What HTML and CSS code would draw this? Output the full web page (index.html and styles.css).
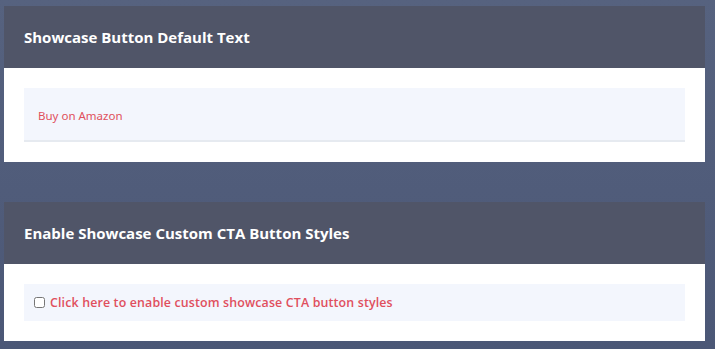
FILE: index.html
```html
<!DOCTYPE html>
<html lang="en">
<head>
  <meta charset="UTF-8" />
  <meta name="viewport" content="width=device-width, initial-scale=1.0"/>
  <title>Showcase Settings</title>
  <link rel="stylesheet" href="styles.css">
</head>
<body>
  <div class="panel">
    <div class="panel-head">
      <h2>Showcase Button Default Text</h2>
    </div>
    <div class="panel-body">
      <div class="field text-field">Buy on Amazon</div>
    </div>
  </div>

  <div class="panel">
    <div class="panel-head">
      <h2>Enable Showcase Custom CTA Button Styles</h2>
    </div>
    <div class="panel-body">
      <label class="field check-field">
        <input type="checkbox" />
        <span>Click here to enable custom showcase CTA button styles</span>
      </label>
    </div>
  </div>
</body>
</html>
```

FILE: styles.css
```css
html {
  background: linear-gradient(to bottom, #56627f, #4b5776);
  min-height: 100%;
}

body {
  margin: 6px 10px 0 4px;
  font-family: 'Open Sans', sans-serif;
  display: flex;
  flex-direction: column;
  gap: 40px;
}

.panel {
  background: #fff;
}

.panel-head {
  background: #505568;
  height: 62px;
  display: flex;
  align-items: center;
  padding: 0 20px;
}

.panel-head h2 {
  margin: 0;
  color: #fff;
  font-size: 15px;
  font-weight: 700;
}

.panel-body {
  padding: 20px;
}

.field {
  background: #f3f6fd;
  display: flex;
  align-items: center;
}

.text-field {
  box-sizing: border-box;
  height: 54px;
  padding: 2px 14px 0;
  border-bottom: 2px solid #e6eaf0;
  color: #e0505c;
  font-size: 11.5px;
  font-family: 'Noto Sans', sans-serif;
}

.check-field {
  height: 37px;
  padding: 0 10px;
  gap: 5px;
  color: #e04f5d;
  font-size: 12.4px;
  font-weight: 600;
  letter-spacing: 0.15px;
  cursor: pointer;
}

.check-field input {
  margin: 0;
  width: 11px;
  height: 11px;
}
```
